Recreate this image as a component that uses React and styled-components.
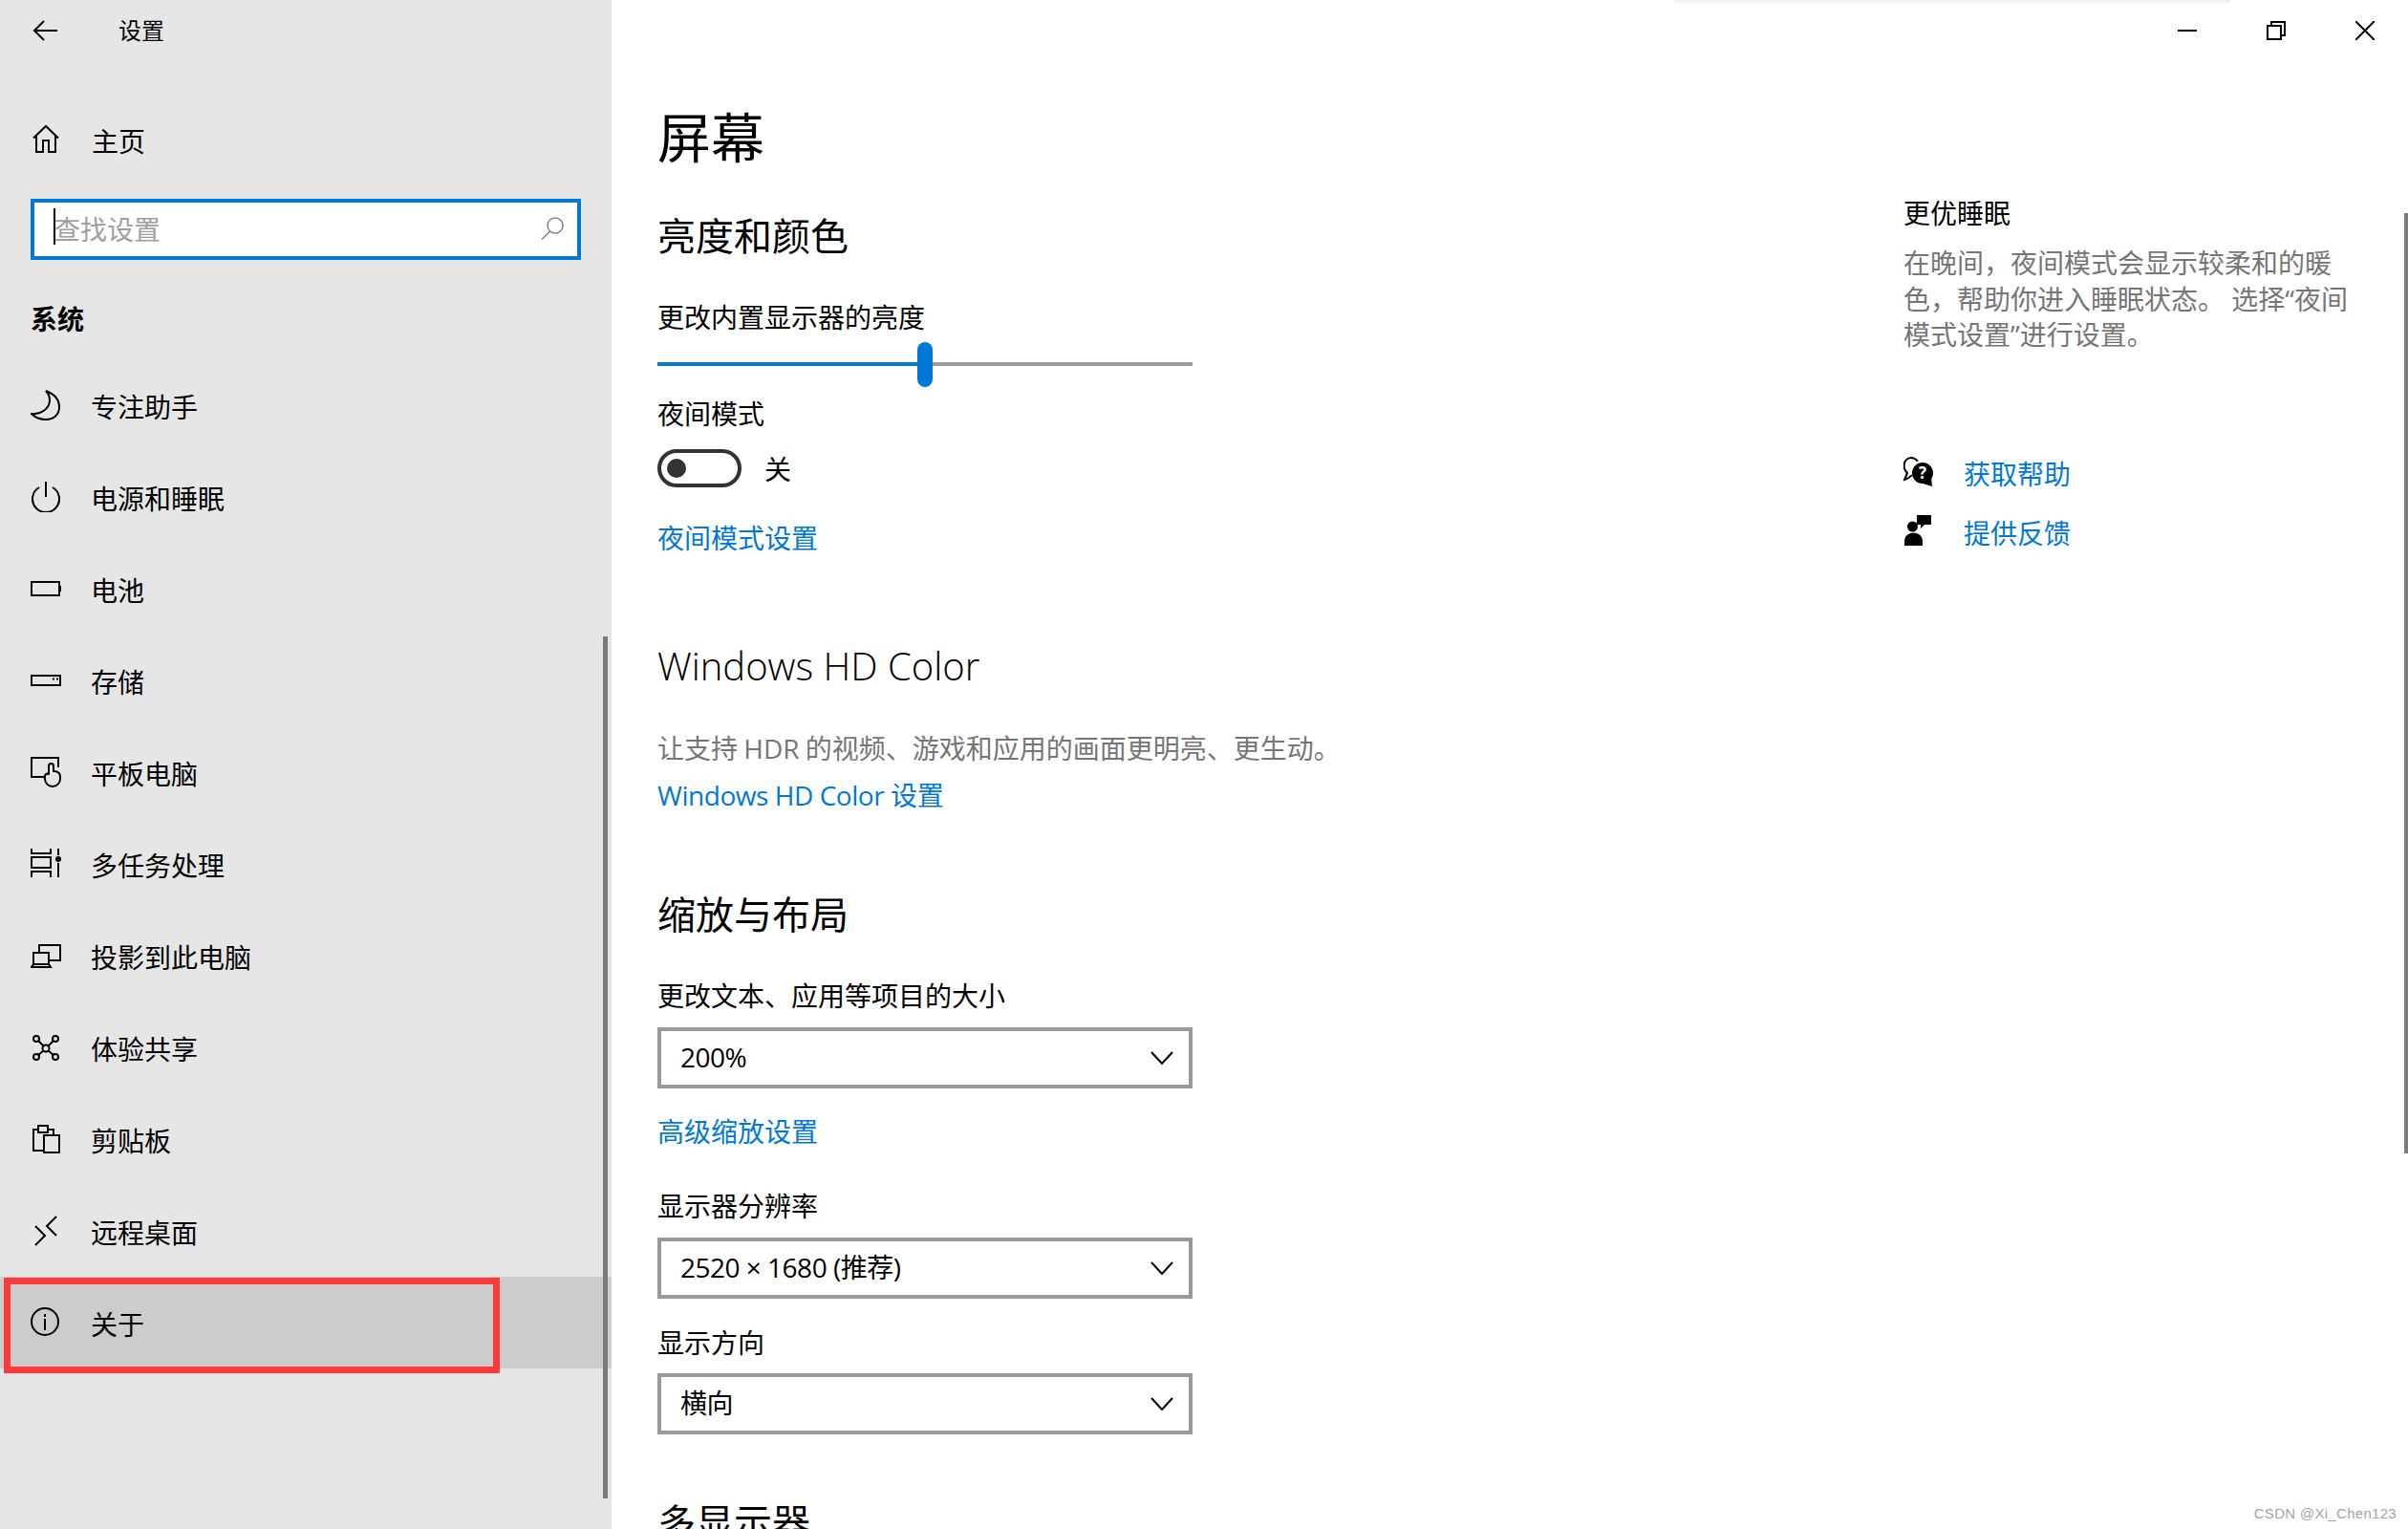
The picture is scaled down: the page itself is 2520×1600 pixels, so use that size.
import styled, { createGlobalStyle } from "styled-components";

const fontStack = `"Open Sans", "Noto Sans CJK SC", sans-serif`;
const blue = "#0078d7";
const grey = "#767676";

const GlobalStyle = createGlobalStyle`
  html, body {
    margin: 0;
    padding: 0;
    background: #fff;
  }
  body {
    font-family: ${fontStack};
    color: #000;
  }
`;

const Window = styled.div`
  position: relative;
  display: flex;
  width: 2520px;
  height: 1600px;
  overflow: hidden;
  background: #fff;
`;

const Sidebar = styled.aside`
  position: relative;
  flex: 0 0 640px;
  display: flex;
  flex-direction: column;
  background: #e6e6e6;
`;

const SidebarTop = styled.div`
  display: flex;
  align-items: center;
  height: 64px;
  padding-left: 32px;
`;

const SidebarTitle = styled.span`
  margin-left: 60px;
  font-size: 24px;
  line-height: 70px;
`;

const NavRow = styled.div`
  position: relative;
  display: flex;
  align-items: center;
  gap: ${(p) => p.$gap || 31}px;
  height: 96px;
  padding-left: 32px;
  font-size: 28px;
  margin-top: ${(p) => p.$mt || 0}px;
  background: ${(p) => (p.$active ? "#cccccc" : "transparent")};
`;

const RowLabel = styled.span`
  line-height: 38px;
  position: relative;
  top: 2px;
`;

const SearchBox = styled.div`
  position: relative;
  display: flex;
  align-items: center;
  justify-content: space-between;
  box-sizing: border-box;
  width: 576px;
  height: 64px;
  margin: 14px 0 0 32px;
  padding: 0 14px 2px 20px;
  border: 4px solid ${blue};
  background: #fff;
  font-size: 28px;
  color: #a0a0a0;

  &::before {
    content: "";
    position: absolute;
    left: 20px;
    top: 6px;
    width: 2px;
    height: 38px;
    background: #000;
  }
`;

const SectionLabel = styled.div`
  margin: 42px 0 22px 32px;
  height: 40px;
  font-size: 28px;
  line-height: 40px;
  font-weight: 700;
`;

const ThinScroll = styled.div`
  position: absolute;
  left: 631px;
  top: 666px;
  width: 5px;
  height: 902px;
  background: #7a7a7a;
`;

const MainScroll = styled.div`
  position: absolute;
  right: 0;
  top: 223px;
  width: 4px;
  height: 984px;
  background: #7a7a7a;
`;

const RedFrame = styled.div`
  position: absolute;
  left: 4px;
  top: 1px;
  box-sizing: border-box;
  width: 519px;
  height: 100px;
  border: 7px solid #fc3a3c;
`;

const Main = styled.main`
  position: relative;
  flex: 1;
  display: flex;
  flex-direction: column;
`;

const TopBar = styled.div`
  display: flex;
  align-items: center;
  justify-content: flex-end;
  gap: 73px;
  height: 64px;
  padding-right: 35px;
  flex: none;
`;

const Shadow = styled.div`
  position: absolute;
  left: 1112px;
  top: 0;
  width: 582px;
  height: 4px;
  background: linear-gradient(#ececec, #fff);
`;

const Body = styled.div`
  display: flex;
  padding-left: 48px;
`;

const Content = styled.div`
  flex: 0 0 1304px;
`;

const PageTitle = styled.h1`
  margin: 43px 0 0;
  height: 72px;
  font-size: 56px;
  line-height: 72px;
  font-weight: 400;
`;

const Heading = styled.h2`
  margin: ${(p) => p.$mt}px 0 0;
  height: 52px;
  font-size: 40px;
  line-height: 52px;
  font-weight: 400;
`;

const LatinHeading = styled(Heading)`
  font-weight: 300;
`;

const Label = styled.div`
  margin-top: ${(p) => p.$mt}px;
  height: 38px;
  font-size: 28px;
  line-height: 38px;
  color: ${(p) => (p.$muted ? grey : "#000")};
  word-spacing: ${(p) => (p.$muted ? "-1px" : "0")};
`;

const LinkText = styled.a`
  display: block;
  margin-top: ${(p) => p.$mt}px;
  height: 38px;
  font-size: 28px;
  line-height: 38px;
  color: ${blue};
  letter-spacing: ${(p) => p.$tight || 0}px;
`;

const Slider = styled.div`
  position: relative;
  display: flex;
  align-items: center;
  width: 560px;
  height: 48px;
  margin-top: 6px;
`;

const Track = styled.div`
  height: 4px;
  flex: ${(p) => p.$grow};
  background: ${(p) => p.$color};
`;

const Thumb = styled.div`
  flex: none;
  width: 16px;
  height: 47px;
  border-radius: 8px;
  background: ${blue};
`;

const ToggleRow = styled.div`
  display: flex;
  align-items: center;
  gap: 24px;
  height: 40px;
  margin-top: 18px;
  font-size: 28px;
`;

const Toggle = styled.div`
  display: flex;
  align-items: center;
  box-sizing: border-box;
  width: 88px;
  height: 40px;
  padding-left: 6px;
  border: 4px solid #333;
  border-radius: 20px;

  &::before {
    content: "";
    width: 20px;
    height: 20px;
    border-radius: 50%;
    background: #333;
  }
`;

const Select = styled.div`
  display: flex;
  align-items: center;
  justify-content: space-between;
  box-sizing: border-box;
  width: 560px;
  height: 64px;
  margin-top: ${(p) => p.$mt}px;
  padding: 0 16px 0 20px;
  border: 4px solid #999;
  font-size: 28px;
  letter-spacing: -0.5px;
`;

const SelectValue = styled.span`
  line-height: 38px;
  padding-bottom: 2px;
`;

const Side = styled.div`
  flex: 0 0 480px;
  padding-top: 140px;
`;

const SideTitle = styled.div`
  height: 38px;
  font-size: 28px;
  line-height: 38px;
`;

const SideText = styled.p`
  margin: 15px 0 0;
  width: 480px;
  font-size: 28px;
  line-height: 37.5px;
  color: ${grey};
`;

const HelpRow = styled.div`
  display: flex;
  align-items: center;
  gap: 30px;
  height: 38px;
  margin-top: ${(p) => p.$mt}px;
`;

const HelpLink = styled.a`
  font-size: 28px;
  line-height: 38px;
  color: ${blue};
`;

const Watermark = styled.div`
  position: absolute;
  right: 12px;
  bottom: 8px;
  font-family: "Liberation Sans", sans-serif;
  font-size: 15px;
  letter-spacing: 0.3px;
  color: #a3a3a3;
`;

const Icon = ({ children, w = 32, h = 32, sw = 2, color = "#000" }) => (
  <svg
    width={w}
    height={h}
    viewBox={`0 0 ${w} ${h}`}
    fill="none"
    stroke={color}
    strokeWidth={sw}
    style={{ flex: "none", display: "block" }}
  >
    {children}
  </svg>
);

const navItems = [
  {
    label: "专注助手",
    icon: <path d="M16 1C24 4 30 10 30 18C30 26 24 31 16 31C10 31 5 29 1 25C10 26 20 20 20 11C20 7 18 3 16 1Z" />,
  },
  {
    label: "电源和睡眠",
    icon: (
      <>
        <path d="M9 6A14 14 0 1 0 23 6" />
        <path d="M16 0V16" />
      </>
    ),
  },
  {
    label: "电池",
    icon: (
      <>
        <rect x="1" y="9" width="29" height="14" />
        <path d="M30 14H32V18H30" fill="#000" />
      </>
    ),
  },
  {
    label: "存储",
    icon: (
      <>
        <path d="M1 11H31V21H1Z" />
        <path d="M23 14.5H25M27 14.5H29" />
      </>
    ),
  },
  {
    label: "平板电脑",
    icon: (
      <>
        <path d="M14 21H1V1H29V11" />
        <path d="M19 19V9.5A2.5 2.5 0 0 1 24 9.5V15C28 15 31 17 31 21V23A8 8 0 0 1 15 23V20C15 18.5 17 17.5 19 17" />
      </>
    ),
  },
  {
    label: "多任务处理",
    icon: (
      <>
        <path d="M1 0V5H21V0M1 9H21V20H1ZM1 30V24H21V30M29 0V7M29 15V30" />
        <circle cx="29" cy="11" r="3" fill="#000" stroke="none" />
      </>
    ),
  },
  {
    label: "投影到此电脑",
    icon: (
      <>
        <path d="M9 12V5H31V21H20" />
        <path d="M3 13H19V25H3ZM1 28L3 25H19L21 28Z" />
      </>
    ),
  },
  {
    label: "体验共享",
    icon: (
      <>
        <circle cx="6" cy="7" r="3" />
        <circle cx="26" cy="7" r="3" />
        <circle cx="6" cy="26" r="3" />
        <circle cx="26" cy="26" r="3" />
        <circle cx="16" cy="17" r="3.5" />
        <path d="M8 9L13.5 14.5M24 9L18.5 14.5M8 24L13.5 19.5M24 24L18.5 19.5" />
      </>
    ),
  },
  {
    label: "剪贴板",
    icon: (
      <>
        <rect x="14" y="12" width="16" height="18" />
        <path d="M14 28H3V6H8V2H18V6H24V12M8 6V9H18V6" />
      </>
    ),
  },
  {
    label: "远程桌面",
    icon: (
      <>
        <path d="M27 1L17 11L27 21" />
        <path d="M5 11L15 21L5 31" />
      </>
    ),
  },
  {
    label: "关于",
    icon: (
      <>
        <circle cx="15" cy="15" r="14" />
        <path d="M15 12V24M15 7V10" />
      </>
    ),
    active: true,
  },
];

const Chevron = () => (
  <Icon w={24} h={14} sw={2}>
    <path d="M1 1L12 13L23 1" />
  </Icon>
);

const App = () => {
  return (
    <>
      <GlobalStyle />
      <Window>
        <Sidebar>
          <SidebarTop>
            <Icon>
              <path d="M28 16H5M14 6L4 16L14 26" />
            </Icon>
            <SidebarTitle>设置</SidebarTitle>
          </SidebarTop>
          <NavRow $mt={34} $gap={32}>
            <Icon>
              <path d="M3 14.5L16 2L29 14.5M6 12V29H13V17H19V29H26V12" />
            </Icon>
            <RowLabel>主页</RowLabel>
          </NavRow>
          <SearchBox>
            <span>查找设置</span>
            <Icon w={24} h={24} sw={1.5} color="#808080">
              <circle cx="15" cy="9" r="8" />
              <path d="M9.5 15L1 23.5" />
            </Icon>
          </SearchBox>
          <SectionLabel>系统</SectionLabel>
          {navItems.map((item) => (
            <NavRow key={item.label} $active={item.active}>
              <Icon>{item.icon}</Icon>
              <RowLabel>{item.label}</RowLabel>
              {item.active && <RedFrame />}
            </NavRow>
          ))}
          <ThinScroll />
        </Sidebar>
        <Main>
          <Shadow />
          <TopBar>
            <Icon w={20} h={20}>
              <path d="M0 10H20" />
            </Icon>
            <Icon w={20} h={20}>
              <path d="M1 5H15V19H1ZM5 5V1H19V15H15" />
            </Icon>
            <Icon w={20} h={20}>
              <path d="M0 0L20 20M20 0L0 20" />
            </Icon>
          </TopBar>
          <Body>
            <Content>
              <PageTitle>屏幕</PageTitle>
              <Heading $mt={42}>亮度和颜色</Heading>
              <Label $mt={40}>更改内置显示器的亮度</Label>
              <Slider>
                <Track $grow="0 0 272px" $color={blue} />
                <Thumb />
                <Track $grow="1" $color="#999" />
              </Slider>
              <Label $mt={9}>夜间模式</Label>
              <ToggleRow>
                <Toggle />
                <span>关</span>
              </ToggleRow>
              <LinkText $mt={34}>夜间模式设置</LinkText>
              <LatinHeading $mt={89}>Windows HD Color</LatinHeading>
              <Label $mt={41} $muted>
                让支持 HDR 的视频、游戏和应用的画面更明亮、更生动。
              </Label>
              <LinkText $mt={11} $tight={-0.45}>
                Windows HD Color 设置
              </LinkText>
              <Heading $mt={80}>缩放与布局</Heading>
              <Label $mt={40}>更改文本、应用等项目的大小</Label>
              <Select $mt={14}>
                <SelectValue>200%</SelectValue>
                <Chevron />
              </Select>
              <LinkText $mt={26}>高级缩放设置</LinkText>
              <Label $mt={40}>显示器分辨率</Label>
              <Select $mt={14}>
                <SelectValue>2520 × 1680 (推荐)</SelectValue>
                <Chevron />
              </Select>
              <Label $mt={27}>显示方向</Label>
              <Select $mt={13}>
                <SelectValue>横向</SelectValue>
                <Chevron />
              </Select>
              <Heading $mt={66}>多显示器</Heading>
            </Content>
            <Side>
              <SideTitle>更优睡眠</SideTitle>
              <SideText>
                在晚间，夜间模式会显示较柔和的暖色，帮助你进入睡眠状态。 选择“夜间模式设置”进行设置。
              </SideText>
              <HelpRow $mt={107}>
                <Icon w={33} h={38} sw={2}>
                  <path d="M15 5.5C13 3.5 11 2 8 2C4 2 0.5 5.5 0.5 10.5C0.5 14 2 16 4 18L1 25C4 24 7 22.5 9 20" />
                  <circle cx="20" cy="18" r="11" fill="#000" stroke="none" />
                  <path d="M14 27L30 32L29 22Z" fill="#000" stroke="none" />
                  <text x="20" y="24" fontSize="17" fontWeight="700" fill="#fff" stroke="none" textAnchor="middle" fontFamily="Open Sans, sans-serif">
                    ?
                  </text>
                </Icon>
                <HelpLink>获取帮助</HelpLink>
              </HelpRow>
              <HelpRow $mt={24}>
                <Icon w={33} h={38} sw={0}>
                  <circle cx="9.5" cy="12" r="5.5" fill="#000" />
                  <path d="M1 32V28C1 22 5 18.5 10.5 18.5C16 18.5 20 22 20 28V32Z" fill="#000" />
                  <path d="M14 0H29V10H22L18 14V10H14Z" fill="#000" />
                </Icon>
                <HelpLink>提供反馈</HelpLink>
              </HelpRow>
            </Side>
          </Body>
          <MainScroll />
        </Main>
        <Watermark>CSDN @Xi_Chen123</Watermark>
      </Window>
    </>
  );
};

export default App;
